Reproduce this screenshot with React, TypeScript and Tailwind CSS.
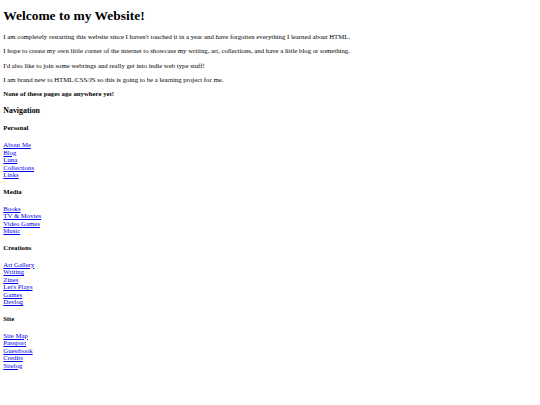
const sections: { title: string; links: string[] }[] = [
  { title: "Personal", links: ["About Me", "Blog", "Luna", "Collections", "Links"] },
  { title: "Media", links: ["Books", "TV & Movies", "Video Games", "Music"] },
  { title: "Creations", links: ["Art Gallery", "Writing", "Zines", "Let's Plays", "Games", "Devlog"] },
  { title: "Site", links: ["Site Map", "Passport", "Guestbook", "Credits", "Sitelog"] },
];

const intro = [
  "I am completely restarting this website since I haven't touched it in a year and have forgotten everything I learned about HTML.",
  "I hope to create my own little corner of the internet to showcase my writing, art, collections, and have a little blog or something.",
  "I'd also like to join some webrings and really get into indie web type stuff!",
  "I am brand new to HTML/CSS/JS so this is going to be a learning project for me.",
];

export default function App() {
  return (
    <div className="min-h-[405px] bg-white px-[3.3px] pt-[8.25px] pb-8 font-['Liberation_Serif','Times_New_Roman',serif] text-[6.78px] leading-[7.5px] text-black">
      <h1 className="text-[13.46px] leading-[15.5px] font-bold">Welcome to my Website!</h1>

      <div className="mt-[9.5px] flex flex-col gap-[6.7px]">
        {intro.map((t) => (
          <p key={t}>{t}</p>
        ))}
        <p className="font-bold">None of these pages ago anywhere yet!</p>
      </div>

      <h3 className="mt-[8.5px] text-[7.86px] leading-[9px] font-bold">Navigation</h3>

      {sections.map((s) => (
        <div key={s.title} className="mt-[9px]">
          <h4 className="font-bold">{s.title}</h4>
          <div className="mt-[9.5px] mb-[9px] flex flex-col">
            {s.links.map((l) => (
              <a key={l} href="#" className="w-fit text-[#0000ee] underline">
                {l}
              </a>
            ))}
          </div>
        </div>
      ))}
    </div>
  );
}
